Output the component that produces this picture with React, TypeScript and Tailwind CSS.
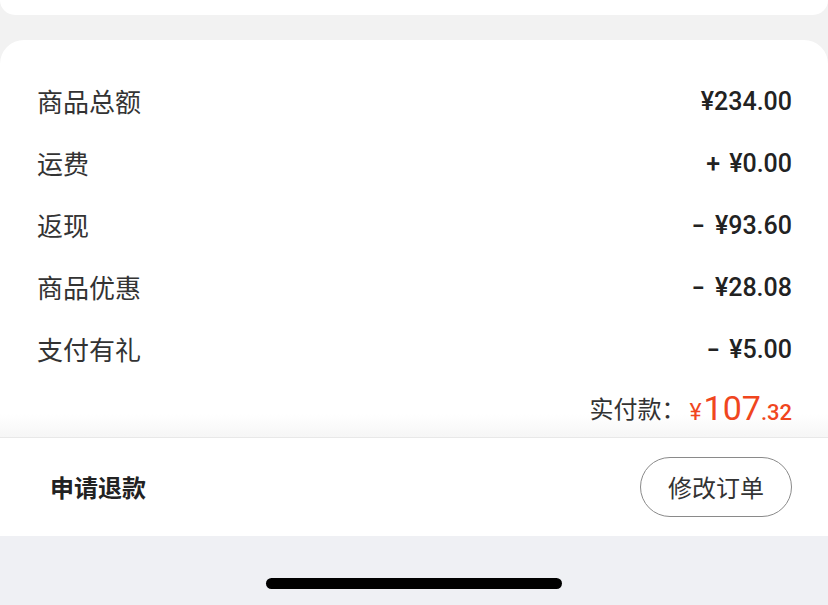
const rows = [
  { label: "商品总额", sign: "", value: "¥234.00" },
  { label: "运费", sign: "+", value: "¥0.00" },
  { label: "返现", sign: "-", value: "¥93.60" },
  { label: "商品优惠", sign: "-", value: "¥28.08" },
  { label: "支付有礼", sign: "-", value: "¥5.00" },
];

const cjk = "font-['Noto_Sans_CJK_SC','Noto_Sans',sans-serif]";

export default function App() {
  return (
    <div className={`w-[828px] h-[605px] bg-[#f2f2f2] overflow-hidden flex flex-col ${cjk}`}>
      {/* previous card bottom */}
      <div className="h-[15px] bg-white rounded-b-[22px] shrink-0" />
      <div className="h-[25px] shrink-0" />

      {/* price detail card */}
      <div className="bg-white rounded-t-[24px] pt-[30px] shrink-0">
        {rows.map((r) => (
          <div key={r.label} className="h-[62px] flex items-center justify-between pl-[37px] pr-[36px]">
            <span className="text-[26px] text-[#333] leading-none">{r.label}</span>
            <span className="text-[25px] font-medium text-[#222] leading-none font-['Roboto',sans-serif] flex items-center">
              {r.sign && (
                <span className={r.sign === "-" ? "mr-[12px] scale-x-150" : "mr-[9px]"}>{r.sign}</span>
              )}
              {r.value}
            </span>
          </div>
        ))}
        <div className="h-[57px] flex items-start justify-end pr-[36px] pt-[8px] bg-gradient-to-b from-white from-60% to-[#f6f6f6]">
          <span className="text-[24px] text-[#333] leading-[40px]">实付款：</span>
          <span className="text-[#f0461e] font-['Roboto',sans-serif] leading-[40px] flex items-baseline ml-[4px]">
            <span className="text-[23px] mr-[2px]">¥</span>
            <span className="text-[34px]">107</span>
            <span className="text-[22px] font-medium">.32</span>
          </span>
        </div>
      </div>

      {/* action bar */}
      <div className="h-[99px] bg-white border-t border-[#e8e8e8] flex items-center justify-between pl-[50px] pr-[36px] shrink-0">
        <span className="text-[24px] font-semibold text-[#222]">申请退款</span>
        <button className="w-[152px] h-[60px] rounded-full border border-[#8a8a8a] text-[24px] text-[#333] flex items-center justify-center">
          修改订单
        </button>
      </div>

      {/* home indicator */}
      <div className="flex-1 bg-[#eff0f4] flex justify-center pt-[42px]">
        <div className="w-[296px] h-[11px] rounded-full bg-black" />
      </div>
    </div>
  );
}
